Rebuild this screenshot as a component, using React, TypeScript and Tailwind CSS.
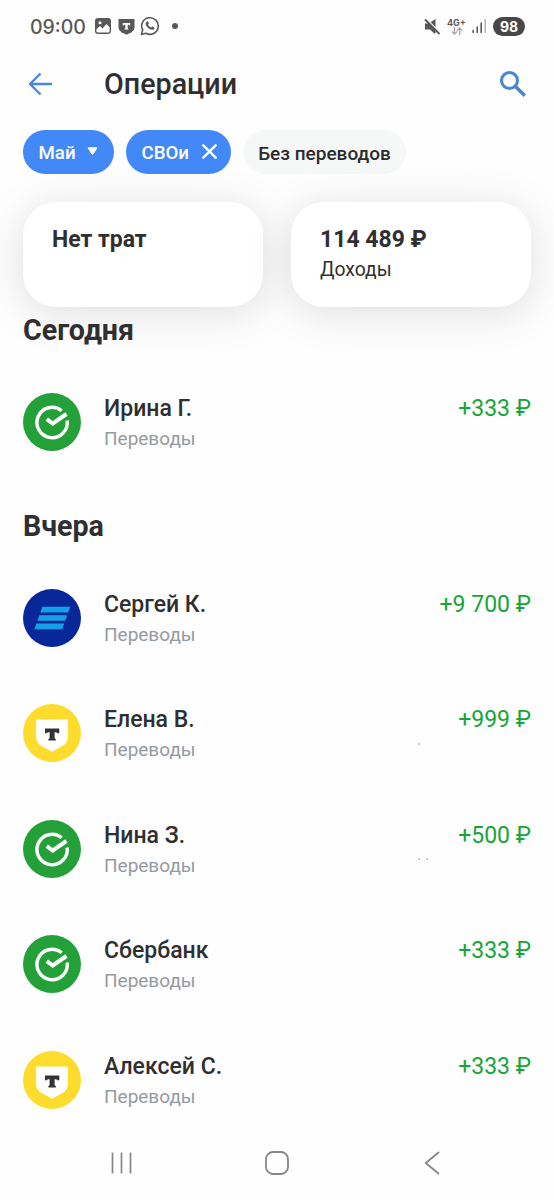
import type { ReactNode } from "react";

type Bank = "sber" | "vtb" | "tbank";

type Operation = {
  name: string;
  bank: Bank;
  amount: string;
  dots?: number;
};

const today: Operation[] = [{ name: "Ирина Г.", bank: "sber", amount: "+333 ₽" }];

const yesterday: Operation[] = [
  { name: "Сергей К.", bank: "vtb", amount: "+9 700 ₽" },
  { name: "Елена В.", bank: "tbank", amount: "+999 ₽", dots: 1 },
  { name: "Нина З.", bank: "sber", amount: "+500 ₽", dots: 2 },
  { name: "Сбербанк", bank: "sber", amount: "+333 ₽" },
  { name: "Алексей С.", bank: "tbank", amount: "+333 ₽" },
];

function StatusBar() {
  return (
    <div className="flex h-[52px] items-center justify-between pl-[30px] pr-[29px] text-[#58585a]">
      <div className="flex items-center">
        <span className="w-[57px] whitespace-nowrap pt-[3px] font-['Inter'] text-[19.5px] font-medium leading-none">
          09:00
        </span>
        <svg width="16" height="16" viewBox="0 0 16 16" className="ml-[7.5px]">
          <rect width="16" height="16" rx="3" fill="currentColor" />
          <circle cx="5" cy="4.8" r="1.5" fill="#fff" />
          <path d="M1.4 11.2 5 8l2.5 2.6L11.5 6l3.1 3.3V13q0 1.5-1.5 1.5H3q-1.6 0-1.6-1.5Z" fill="#fff" />
        </svg>
        <svg width="17" height="17" viewBox="0 0 17 17" className="ml-[7px]">
          <path d="M.5 1h16v8.500q0 3-3 4.700l-5 2.600-5-2.600q-3-1.700-3-4.700Z" fill="currentColor" />
          <path d="M4.800 5h7.400v2.400h-.9l-.4-.7H9.700v3.700l.8.6v.6h-4V11l.8-.6V6.700H6.100l-.4.700h-.9Z" fill="#fff" />
        </svg>
        <svg width="20" height="20" viewBox="0 0 20 20" className="ml-[5.5px]" fill="none">
          <path
            d="M1.400 18.600 2.700 14A8.300 8.300 0 1 1 6 17.300Z"
            stroke="currentColor"
            strokeWidth="1.6"
            strokeLinejoin="round"
          />
          <path
            d="M6.900 5.500c.5-.4 1-.3 1.300.3l.6 1.400c.2.500-.2.900-.7 1.500.8 1.400 1.700 2.200 3.100 2.800.7-.8 1-1.200 1.500-.9l1.600.8c.4.300.2 1.500-.6 2-1 .7-2.500.5-4.500-.6-1.900-1.200-3.300-3.200-3.500-4.700-.1-1.200.5-2.100 1.200-2.600Z"
            fill="currentColor"
          />
        </svg>
        <span className="ml-[12px] size-[6px] rounded-full bg-current" />
      </div>

      <div className="flex items-center">
        <svg width="17" height="17" viewBox="0 0 17 17">
          <path d="M1 5.500h3.500L11.500 1v14l-1 .8L6 11.500H1Z" fill="currentColor" />
          <path d="M1.500.500 17 16" stroke="#fefefe" strokeWidth="2" />
          <path d="m1 1.500 14.500 14.500" stroke="currentColor" strokeWidth="2" />
        </svg>
        <div className="ml-[6px] flex w-[19px] flex-col items-center">
          <span className="font-['Inter'] text-[9px] font-bold leading-[9px]">4G+</span>
          <svg width="12" height="8" viewBox="0 0 12 8" fill="none" stroke="#a3a3a3" strokeWidth="1.2">
            <path d="M3.500 0v7M.8 4.400l2.700 2.700 2.700-2.700M8.700 8V1M6 3.600 8.700.9l2.700 2.700" />
          </svg>
        </div>
        <svg width="15" height="16" viewBox="0 0 15 16" className="ml-[6px]" strokeWidth="1.6" strokeLinecap="round">
          <path d="M1.200 12.500v2M5.200 9v5.500M9.200 5v9.500" stroke="#58585a" />
          <path d="M13.200 1.500v13" stroke="#b5b5b5" />
        </svg>
        <span className="ml-[6px] flex h-[19px] w-[32px] items-center justify-center rounded-full bg-[#474747] pt-px font-['Inter'] text-[14px] font-bold leading-none text-white">
          98
        </span>
      </div>
    </div>
  );
}

function Header() {
  return (
    <header className="flex h-[64px] items-center pl-[28px] pr-[28.5px]">
      <svg width="25" height="24" viewBox="0 0 25 24" fill="none" stroke="#4687dc" strokeWidth="2.4">
        <path d="M24 12H2.500M12.500 1.500 2 12l10.500 10.500" strokeLinejoin="round" />
      </svg>
      <h1 className="ml-[51px] flex-1 text-[28.7px] font-medium leading-none">Операции</h1>
      <svg width="26" height="26" viewBox="0 0 26 26" fill="none" stroke="#4687d3" strokeWidth="3">
        <circle cx="9.500" cy="9.500" r="8" />
        <path d="m15.300 15.300 9.500 9.500" strokeWidth="3.4" />
      </svg>
    </header>
  );
}

function Filters() {
  return (
    <div className="mt-[14px] flex h-[43.5px] gap-[12px] px-[23px] text-[18.7px] font-medium leading-none text-white">
      <button className="flex w-[91px] items-center justify-between rounded-full bg-[#4288f7] pl-[15.5px] pr-[16px]">
        <span className="pt-[3px]">Май</span>
        <svg width="11" height="9" viewBox="0 0 11 9">
          <path d="M1 .8h9L5.500 7.800Z" fill="#fff" stroke="#fff" strokeLinejoin="round" />
        </svg>
      </button>
      <button className="flex w-[105px] items-center justify-between rounded-full bg-[#4288f7] pl-[15.5px] pr-[14px]">
        <span className="pt-[3px]">СВОи</span>
        <svg width="15" height="15" viewBox="0 0 15 15" stroke="#fff" strokeWidth="2.4" strokeLinecap="round">
          <path d="m1.300 1.300 12.400 12.400M13.700 1.300 1.300 13.700" />
        </svg>
      </button>
      <button className="flex w-[163px] items-center justify-center whitespace-nowrap rounded-full bg-[#f6f8f8] pt-[3px] text-[19px] text-[#2b2b2d]">
        Без переводов
      </button>
    </div>
  );
}

function SummaryCard({ title, children }: { title: string; children?: ReactNode }) {
  return (
    <div className="h-[105px] rounded-[33px] bg-white pl-[29px] pt-[24px] shadow-[0_6px_44px_rgba(0,0,0,0.13)]">
      <div className="text-[23px] font-bold leading-[28px]">{title}</div>
      {children}
    </div>
  );
}

function BankLogo({ bank }: { bank: Bank }) {
  if (bank === "sber") {
    return (
      <svg width="58" height="58" viewBox="0 0 58 58" fill="none" stroke="#fff" strokeWidth="3.4">
        <circle cx="29" cy="29" r="29" fill="#24a038" stroke="none" />
        <path d="M38.700 17.700A15.200 15.200 0 1 0 44.200 27.500" />
        <path d="m23.800 26.200 5.900 4.300L43.500 21" strokeWidth="4" />
      </svg>
    );
  }
  if (bank === "vtb") {
    return (
      <svg width="58" height="58" viewBox="0 0 58 58" fill="#14a0e8">
        <circle cx="29" cy="29" r="29" fill="#08289a" />
        <path d="M19.400 17.800h27.800l-2 5.600H17.400ZM16.400 26.200h27.800l-2 5.600H14.400ZM13.400 34.600h27.800l-2 5.600H11.400Z" />
      </svg>
    );
  }
  return (
    <svg width="58" height="58" viewBox="0 0 58 58">
      <circle cx="29" cy="29" r="29" fill="#fddc2d" />
      <path d="M13.100 15.500h31.800v17.300q0 6.200-5.400 9.300L29 47.800l-10.500-5.700q-5.400-3.100-5.400-9.300Z" fill="#fff" />
      <path d="M22 24.500h14.300v4.700h-2.200l-.5-.9h-2v5.900l1.200.7v1.700h-7.400v-1.700l1.200-.7v-5.900h-2l-.5.900H22Z" fill="#333" />
    </svg>
  );
}

function OperationRow({ name, bank, amount, dots = 0 }: Operation) {
  return (
    <li className="relative flex h-[115.4px] items-center">
      <BankLogo bank={bank} />
      <div className="ml-[23px] flex flex-1 flex-col pt-[4px]">
        <span className="text-[23px] font-medium leading-[30px]">{name}</span>
        <span className="text-[19px] leading-[30px] text-[#959aa1]">Переводы</span>
      </div>
      <span className="mb-[26px] whitespace-nowrap text-[23px] leading-[30px] text-[#16a637]">{amount}</span>
      {dots > 0 && (
        <span className="absolute left-[395px] top-[67px] flex gap-[6px]">
          {Array.from({ length: dots }, (_, i) => (
            <i key={i} className="size-[2px] rounded-full bg-[#b8b8b8]" />
          ))}
        </span>
      )}
    </li>
  );
}

function Section({ title, items }: { title: string; items: Operation[] }) {
  return (
    <section className="px-[23px]">
      <h2 className="relative text-[28.6px] font-bold leading-[46px]">{title}</h2>
      <ul className="mt-[11.5px]">
        {items.map((item) => (
          <OperationRow key={item.name} {...item} />
        ))}
      </ul>
    </section>
  );
}

function NavBar() {
  return (
    <nav className="flex items-center pl-[111px]">
      <svg width="21" height="24" viewBox="0 0 21 24" stroke="#868686" strokeWidth="1.7">
        <path d="M1.500 1.500v21M10.500 1.500v21M19.500 1.500v21" />
      </svg>
      <svg width="24" height="24" viewBox="0 0 24 24" fill="none" stroke="#868686" strokeWidth="1.8" className="ml-[132.5px]">
        <rect x="1" y="1" width="22" height="22" rx="7" />
      </svg>
      <svg width="16" height="24" viewBox="0 0 16 24" fill="none" stroke="#868686" strokeWidth="1.8" className="ml-[135px]">
        <path d="M15 1 1.800 12 15 23" />
      </svg>
    </nav>
  );
}

export default function App() {
  return (
    <div className="flex h-[1200px] w-[554px] flex-col overflow-hidden bg-[#fefefe] font-['Roboto',sans-serif] text-[#2f2f31]">
      <StatusBar />
      <Header />
      <Filters />

      <div className="mt-[28.5px] grid grid-cols-2 gap-[28px] px-[23px]">
        <SummaryCard title="Нет трат" />
        <SummaryCard title="114 489 ₽">
          <div className="mt-[2px] text-[19.3px] leading-[28px]">Доходы</div>
        </SummaryCard>
      </div>

      <Section title="Сегодня" items={today} />
      <div className="h-[23px] shrink-0" />
      <Section title="Вчера" items={yesterday} />

      <div className="mt-auto pb-[25px]">
        <NavBar />
      </div>
    </div>
  );
}
